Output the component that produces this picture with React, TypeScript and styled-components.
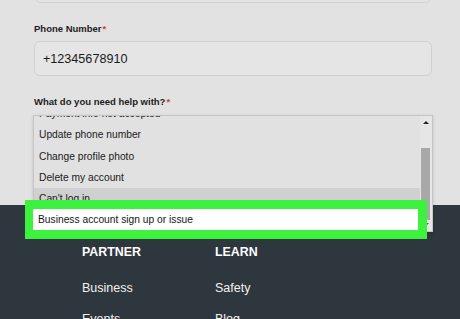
import styled, { createGlobalStyle } from 'styled-components'

const GlobalStyle = createGlobalStyle`
  html, body {
    margin: 0;
    padding: 0;
    background: #e2e2e2;
    font-family: "Liberation Sans", Arial, sans-serif;
    overflow: hidden;
  }
`

const Page = styled.div`
  width: 460px;
  height: 319px;
  overflow: hidden;
`

const Form = styled.section`
  height: 205px;
  padding: 0 28px 0 34px;
  box-sizing: border-box;
  display: flex;
  flex-direction: column;
  position: relative;
  z-index: 2;
`

const TopInput = styled.div`
  height: 36px;
  margin: -33px 0 0 1px;
  width: 397px;
  box-sizing: border-box;
  border: 1px solid #d2d2d2;
  border-radius: 6px;
  background: #e4e4e4;
`

const Label = styled.label<{ $gap: number }>`
  margin-top: ${({ $gap }) => $gap}px;
  font-size: 9.5px;
  line-height: 12px;
  font-weight: bold;
  color: #1c1c1c;

  span {
    color: #d04040;
    margin-left: 1px;
  }
`

const Input = styled.div`
  margin-top: 6px;
  height: 35px;
  width: 398px;
  box-sizing: border-box;
  border: 1px solid #d0d0d0;
  border-radius: 6px;
  background: #e5e5e5;
  display: flex;
  align-items: center;
  padding-left: 8px;
  font-size: 12.6px;
  color: #1a1a1a;
`

const SelectAnchor = styled.div`
  position: relative;
  margin-top: 7px;
  height: 0;
`

const Dropdown = styled.div`
  position: absolute;
  top: 0;
  left: -1px;
  width: 400px;
  height: 117px;
  box-sizing: border-box;
  border: 1px solid #c6c6c6;
  background: #e1e1e1;
  box-shadow: 0 1px 3px rgba(0, 0, 0, 0.15);
  overflow: hidden;
`

const OptionList = styled.ul`
  list-style: none;
  margin: -13px 12px 0 0;
  padding: 0;
`

const Option = styled.li<{ $active?: boolean }>`
  height: 21.25px;
  display: flex;
  align-items: center;
  padding-left: 5px;
  font-size: 10.25px;
  color: #1a1a1a;
  background: ${({ $active }) => ($active ? '#d0d0d0' : 'transparent')};
`

const Scrollbar = styled.div`
  position: absolute;
  top: 0;
  right: 0;
  bottom: 0;
  width: 12px;
  background: #e6e6e6;
`

const Thumb = styled.div`
  position: absolute;
  top: 32px;
  left: 1px;
  right: 2px;
  height: 72px;
  background: #a8a8a8;
`

const Arrow = styled.div<{ $down?: boolean }>`
  position: absolute;
  left: 3px;
  ${({ $down }) => ($down ? 'bottom: 5px;' : 'top: 5px;')}
  width: 0;
  height: 0;
  border-left: 3px solid transparent;
  border-right: 3px solid transparent;
  ${({ $down }) =>
    $down ? 'border-top: 3px solid #555;' : 'border-bottom: 3px solid #222;'}
`

const Highlight = styled.div`
  position: absolute;
  top: 85px;
  left: -9px;
  width: 402px;
  height: 39px;
  box-sizing: border-box;
  padding: 9px 9px 9px 8px;
  background: #3cf23e;
`

const HighlightInner = styled.div`
  height: 21px;
  background: #ffffff;
  display: flex;
  align-items: center;
  padding-left: 5px;
  font-size: 10.25px;
  color: #151515;
`

const Footer = styled.footer`
  height: 114px;
  background: #2e363e;
  padding: 40px 0 0 82px;
  box-sizing: border-box;
  display: grid;
  grid-template-columns: 133px 133px;
  align-items: start;
`

const Column = styled.div`
  display: flex;
  flex-direction: column;
  gap: 16px;
`

const Heading = styled.h4`
  margin: 0 0 5px;
  font-size: 12.4px;
  line-height: 15px;
  font-weight: bold;
  color: #ffffff;
`

const FooterLink = styled.a`
  font-size: 12.5px;
  line-height: 15px;
  color: #f2f2f2;
  text-decoration: none;
`

const options = [
  'Payment info not accepted',
  'Update phone number',
  'Change profile photo',
  'Delete my account',
  "Can't log in",
  'Business account sign up or issue',
  'Other',
]

const footer = [
  { title: 'PARTNER', links: ['Business', 'Events'] },
  { title: 'LEARN', links: ['Safety', 'Blog'] },
]

const App = () => {
  return (
    <Page>
      <GlobalStyle />
      <Form>
        <TopInput />
        <Label $gap={20}>
          Phone Number<span>*</span>
        </Label>
        <Input>+12345678910</Input>
        <Label $gap={20}>
          What do you need help with?<span>*</span>
        </Label>
        <SelectAnchor>
          <Dropdown>
            <OptionList>
              {options.map((o) => (
                <Option key={o} $active={o === "Can't log in"}>
                  {o}
                </Option>
              ))}
            </OptionList>
            <Scrollbar>
              <Arrow />
              <Thumb />
              <Arrow $down />
            </Scrollbar>
          </Dropdown>
          <Highlight>
            <HighlightInner>Business account sign up or issue</HighlightInner>
          </Highlight>
        </SelectAnchor>
      </Form>
      <Footer>
        {footer.map((col) => (
          <Column key={col.title}>
            <Heading>{col.title}</Heading>
            {col.links.map((l) => (
              <FooterLink key={l} href="#">
                {l}
              </FooterLink>
            ))}
          </Column>
        ))}
      </Footer>
    </Page>
  )
}

export default App
